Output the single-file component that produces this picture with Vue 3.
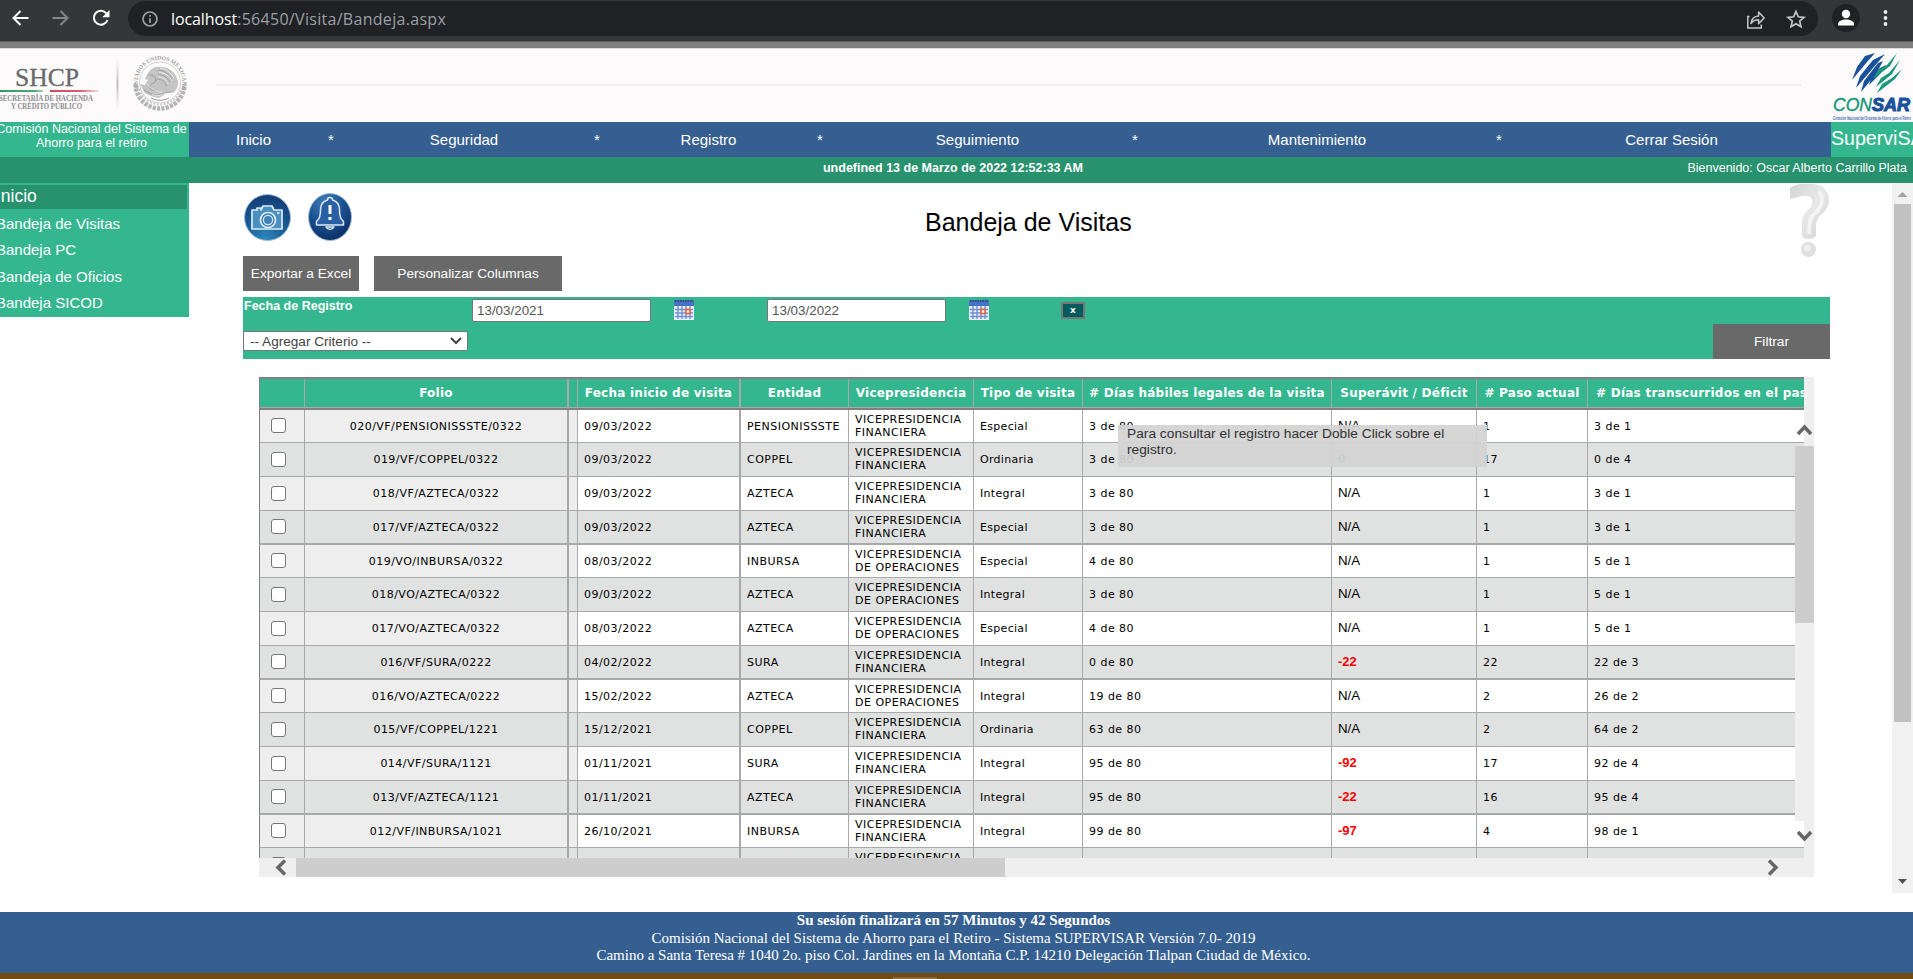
<script setup>
const menu = ['Inicio', 'Seguridad', 'Registro', 'Seguimiento', 'Mantenimiento', 'Cerrar Sesión']
const sideItems = ['Bandeja de Visitas', 'Bandeja PC', 'Bandeja de Oficios', 'Bandeja SICOD']
const heads = ['', 'Folio', '', 'Fecha inicio de visita', 'Entidad', 'Vicepresidencia', 'Tipo de visita', '# Días hábiles legales de la visita', 'Superávit / Déficit', '# Paso actual', '# Días transcurridos en el paso']
const FIN = ['VICEPRESIDENCIA', 'FINANCIERA']
const OPE = ['VICEPRESIDENCIA', 'DE OPERACIONES']
const rows = [
  ['020/VF/PENSIONISSSTE/0322', '09/03/2022', 'PENSIONISSSTE', FIN, 'Especial', '3 de 80', 'N/A', '1', '3 de 1'],
  ['019/VF/COPPEL/0322', '09/03/2022', 'COPPEL', FIN, 'Ordinaria', '3 de 80', '0', '17', '0 de 4'],
  ['018/VF/AZTECA/0322', '09/03/2022', 'AZTECA', FIN, 'Integral', '3 de 80', 'N/A', '1', '3 de 1'],
  ['017/VF/AZTECA/0322', '09/03/2022', 'AZTECA', FIN, 'Especial', '3 de 80', 'N/A', '1', '3 de 1'],
  ['019/VO/INBURSA/0322', '08/03/2022', 'INBURSA', OPE, 'Especial', '4 de 80', 'N/A', '1', '5 de 1'],
  ['018/VO/AZTECA/0322', '09/03/2022', 'AZTECA', OPE, 'Integral', '3 de 80', 'N/A', '1', '5 de 1'],
  ['017/VO/AZTECA/0322', '08/03/2022', 'AZTECA', OPE, 'Especial', '4 de 80', 'N/A', '1', '5 de 1'],
  ['016/VF/SURA/0222', '04/02/2022', 'SURA', FIN, 'Integral', '0 de 80', '-22', '22', '22 de 3'],
  ['016/VO/AZTECA/0222', '15/02/2022', 'AZTECA', OPE, 'Integral', '19 de 80', 'N/A', '2', '26 de 2'],
  ['015/VF/COPPEL/1221', '15/12/2021', 'COPPEL', FIN, 'Ordinaria', '63 de 80', 'N/A', '2', '64 de 2'],
  ['014/VF/SURA/1121', '01/11/2021', 'SURA', FIN, 'Integral', '95 de 80', '-92', '17', '92 de 4'],
  ['013/VF/AZTECA/1121', '01/11/2021', 'AZTECA', FIN, 'Integral', '95 de 80', '-22', '16', '95 de 4'],
  ['012/VF/INBURSA/1021', '26/10/2021', 'INBURSA', FIN, 'Integral', '99 de 80', '-97', '4', '98 de 1'],
  ['', '', '', FIN, '', '', '', '', ''],
]
const balance = (v) => (v.startsWith('-') ? 'neg' : v === '0' ? 'zero' : '')
</script>

<template>
  <div class="page">
    <div class="chrome">
      <svg class="navicons" width="128" height="36" viewBox="0 0 128 36" fill="none" stroke="#fff" stroke-width="2">
        <path d="M28.5 18H14M20.5 11l-7 7 7 7" />
        <path d="M52.500 18H67M60.500 11l7 7-7 7" stroke="#85868a" />
        <path d="M106.500 13.500A7 7 0 1 0 107.500 20" />
        <path d="M109.500 10v7.200h-7.200z" fill="#fff" stroke="none" />
      </svg>
      <div class="pill">
        <svg width="18" height="18" viewBox="0 0 18 18" fill="none" stroke="#9aa0a6" stroke-width="1.700">
          <circle cx="9" cy="9" r="7" /><path d="M9 8.200V13M9 5v1.800" />
        </svg>
        <span class="url"><b>localhost</b>:56450/Visita/Bandeja.aspx</span>
        <svg class="share" width="64" height="24" viewBox="0 0 64 24" fill="none" stroke="#c4c5c7" stroke-width="1.500">
          <path d="M4.500 9.500H2.800V21h13.500v-3.500" />
          <path d="M6 16.500c.6-5 3.600-7.300 7.600-7.500V5l5.600 6-5.600 5.600v-3.800c-3.400 0-5.800 1-7.600 3.700z" stroke-linejoin="round" />
          <path d="M51 4.500l2.300 5.300 5.700.5-4.300 3.800 1.300 5.600-5-3-5 3 1.300-5.600-4.300-3.800 5.700-.5z" stroke-width="1.700" />
        </svg>
      </div>
      <svg class="account" width="95" height="36" viewBox="0 0 95 36">
        <circle cx="28" cy="18" r="14" fill="#202124" />
        <circle cx="28" cy="14" r="4.200" fill="#fff" />
        <path d="M20 25.600v-1.400c0-3 4-4.600 8-4.600s8 1.600 8 4.600v1.400z" fill="#fff" />
        <g fill="#e8eaed"><circle cx="67.500" cy="12" r="1.900" /><circle cx="67.500" cy="18" r="1.900" /><circle cx="67.500" cy="24" r="1.900" /></g>
      </svg>
    </div>
    <div class="edge"></div>

    <header class="banner">
      <svg width="216" height="74" viewBox="0 0 216 74">
        <defs>
          <linearGradient id="gr" x1="0" x2="1"><stop offset="0" stop-color="#2f9a5a" /><stop offset=".8" stop-color="#4fa874" /><stop offset="1" stop-color="#a9d3ba" /></linearGradient>
          <linearGradient id="rd" x1="0" x2="1"><stop offset="0" stop-color="#d04a5f" /><stop offset=".6" stop-color="#dc5c6e" /><stop offset="1" stop-color="#f6dfe2" /></linearGradient>
          <linearGradient id="dv" x1="0" y1="0" x2="0" y2="1"><stop offset="0" stop-color="#fcfafb" /><stop offset=".5" stop-color="#bbb" /><stop offset="1" stop-color="#fcfafb" /></linearGradient>
        </defs>
        <g font-family="'Liberation Serif', serif" fill="#6a6a6a">
          <text x="15" y="38" font-size="25" textLength="64" lengthAdjust="spacingAndGlyphs" stroke="#6a6a6a" stroke-width=".3">SHCP</text>
          <g font-size="7.200" font-weight="bold" fill="#8c8c8c">
            <text x="-1" y="52.500" textLength="94" lengthAdjust="spacingAndGlyphs">SECRETARÍA DE HACIENDA</text>
            <text x="11" y="61" textLength="71" lengthAdjust="spacingAndGlyphs">Y CRÉDITO PÚBLICO</text>
          </g>
        </g>
        <rect x="0" y="42" width="43" height="2" fill="url(#gr)" />
        <rect x="50" y="42" width="49" height="2" fill="url(#rd)" />
        <rect x="116.500" y="12" width="2" height="48" fill="url(#dv)" />
        <g fill="none" stroke="#b4b5b4">
          <path id="arc" d="M138.500 40A22.300 22.300 0 1 1 181.500 40" stroke="none" />
          <circle cx="160" cy="34.500" r="20.500" stroke-width=".8" stroke="#c5c5c5" />
          <path d="M135.500 36a24.500 24.500 0 0 0 49 0" stroke-width="4.500" stroke-dasharray="3.200 1.200" />
          <path d="M139 41a22 22 0 0 0 42 0" stroke-width="2" stroke-dasharray="2 1.500" stroke="#c9c9c9" />
        </g>
        <text font-family="'Liberation Serif', serif" font-size="5.800" font-weight="bold" fill="#a0a0a0"><textPath href="#arc" textLength="87">ESTADOS UNIDOS MEXICANOS</textPath></text>
        <path d="M147 27c3-6 8-9 14-8 9 0 16 7 17 15 0 4-1 7-3 9-3 0-5 1-8 2l-8 5c-6-1-12-3-15-6l-4-8 5 1 3-5-3-1z" fill="#c3c4c3" />
        <g fill="none" stroke="#9b9c9b" stroke-width="1">
          <path d="M149 27c4 0 7 2 7 5s-5 3-6 6 3 5 7 4M158 22c6 1 12 4 14 9M158 26c5 1 10 4 12 8M157 31c5 0 8 3 10 7M144 42c6 4 12 6 18 4s8-2 12-2M151 50c5 3 13 3 18 0" />
        </g>
        <g fill="none" stroke="#ebebeb" stroke-width=".9">
          <path d="M160 20c6 1 12 5 14 11M159 24c6 1 11 4 13 9M158 29c5 0 9 3 10 7M147 36c4 4 9 8 15 8M152 46c4 2 9 2 14-1" />
        </g>
      </svg>
      <div class="rule"></div>
      <svg class="consar" width="82" height="74" viewBox="0 0 82 74">
        <g fill="#1a519a">
          <path d="M34 8l10-3-8 9-15 18 5-13z" />
          <path d="M42 12l12-6-12 14-17 20 4-12z" />
          <path d="M47 15l5-2-7 13-15 18 3-11z" />
          <path d="M49 20l6-3-6 9-11 11 3-9z" />
        </g>
        <g fill="#17967a">
          <path d="M66 5l-7 13-17 13 5-9 9-5z" />
          <path d="M69 12l-8 14-16 13 5-9 8-5z" />
          <path d="M71 21l-7 10-18 14 5-9 10-6z" />
        </g>
        <g font-family="'Liberation Sans', sans-serif" font-style="italic" font-size="18.500">
          <text x="2" y="63" fill="#17967a" stroke="#17967a" stroke-width=".4" textLength="39" lengthAdjust="spacingAndGlyphs">CON</text>
          <text x="41" y="63" fill="#1a519a" font-weight="bold" stroke="#1a519a" stroke-width="1.100" textLength="38" lengthAdjust="spacingAndGlyphs">SAR</text>
        </g>
        <text x="2" y="71.500" font-family="'Liberation Sans', sans-serif" font-size="5.500" fill="#3f6cab" font-weight="bold" textLength="78" lengthAdjust="spacingAndGlyphs">Comisión Nacional del Sistema de Ahorro para el Retiro</text>
      </svg>
    </header>

    <nav class="topnav">
      <div class="org"><div class="org-text">Comisión Nacional del Sistema de<br />Ahorro para el retiro</div></div>
      <div class="links">
        <template v-for="(m, i) in menu" :key="m">
          <span v-if="i" class="star">*</span>
          <span class="link">{{ m }}</span>
        </template>
      </div>
      <div class="app-name">SuperviSAR</div>
    </nav>
    <div class="status">
      <span></span>
      <strong>undefined 13 de Marzo de 2022 12:52:33 AM</strong>
      <span class="welcome">Bienvenido: Oscar Alberto Carrillo Plata</span>
    </div>

    <div class="body">
      <aside class="side">
        <div class="side-head">Inicio</div>
        <div v-for="s in sideItems" :key="s" class="side-item">{{ s }}</div>
      </aside>

      <main class="main">
        <div class="title-row">
          <svg class="round-icons" width="112" height="50" viewBox="0 0 112 50">
            <defs>
              <radialGradient id="ball" cx=".45" cy=".95" r=".95"><stop offset="0" stop-color="#2b86b8" /><stop offset=".5" stop-color="#1b5b94" /><stop offset="1" stop-color="#123c74" /></radialGradient>
              <radialGradient id="ball2" cx=".4" cy=".2" r=".9"><stop offset="0" stop-color="#3f7db8" /><stop offset=".5" stop-color="#1a4f8f" /><stop offset="1" stop-color="#08265c" /></radialGradient>
            </defs>
            <circle cx="24.500" cy="25.500" r="23" fill="url(#ball)" stroke="#9fc0da" stroke-width="1" />
            <g fill="#4a8fbd" stroke="#dcebf5" stroke-width="1.700">
              <path d="M9 18h5v-2h4v2l2-4h9l2 4h8v19H9z" stroke-linejoin="round" />
              <circle cx="25" cy="28" r="7.500" fill="#3f83b4" /><circle cx="25" cy="28" r="4.600" fill="none" stroke-width="1.200" />
              <path d="M34 21h2.500" />
            </g>
            <ellipse cx="87" cy="25" rx="21.500" ry="23.500" fill="url(#ball2)" stroke="#9fb8d6" stroke-width="1" />
            <g fill="#2b5fa5" stroke="#dbe7f4" stroke-width="1.500" stroke-linejoin="round">
              <path d="M83 35a4.500 4.500 0 0 0 8 0z" />
              <path d="M87 5.500a2.500 2.500 0 0 1 2.500 2.500c5 1.300 7 5 7 10 0 7 1.500 9 4 11.500V33H73.500v-3.500c2.500-2.500 4-4.500 4-11.500 0-5 2-8.700 7-10A2.500 2.500 0 0 1 87 5.500z" />
            </g>
            <path d="M87 13v9M87 25v3" stroke="#fff" stroke-width="3" />
          </svg>
          <h1>Bandeja de Visitas</h1>
          <svg class="help" width="42" height="76" viewBox="0 0 42 76">
            <defs>
              <linearGradient id="q" x1="0" y1="0" x2="1" y2="1"><stop offset="0" stop-color="#d4d5d4" /><stop offset=".5" stop-color="#e6e7e6" /><stop offset="1" stop-color="#d2d4d2" /></linearGradient>
            </defs>
            <path d="M1 4C9-2 27-2 35 4c8 8 6 20-3 27-5 4-5 8-5 21-3 4-12 4-14 0V39c0-7 4-11 8-15 4-5 3-11-3-12-5-1-9 2-17 3z" fill="url(#q)" />
            <path d="M30 7c5 7 3 15-3 21-5 4-7 8-7 22" stroke="#f3f4f3" stroke-width="4" fill="none" />
            <circle cx="19.500" cy="65.500" r="7.500" fill="#dedfde" /><circle cx="18.500" cy="64" r="3.500" fill="#efefef" />
          </svg>
        </div>

        <div class="buttons">
          <button class="btn export">Exportar a Excel</button>
          <button class="btn custom">Personalizar Columnas</button>
        </div>

        <section class="filter">
          <div class="criteria">
            <strong class="flabel">Fecha de Registro</strong>
            <div class="date">13/03/2021</div>
            <svg class="cal" width="20" height="20" viewBox="0 0 20 20">
              <rect width="20" height="20" fill="#eaf0fb" /><rect width="20" height="6" fill="#4673c4" />
              <path d="M1 1h18" stroke="#2d3f63" stroke-width="1.500" stroke-dasharray="1.500 1" />
              <path d="M1 9.500h18M1 13h18M1 16.500h18M4 6v13M8 6v13M12 6v13M16 6v13" stroke="#7391d2" stroke-width="1.400" />
              <rect x="12" y="9.500" width="4" height="4" fill="#fff" stroke="#ef5b2b" stroke-width="1.500" />
            </svg>
            <div class="date second">13/03/2022</div>
            <svg class="cal" width="20" height="20" viewBox="0 0 20 20">
              <rect width="20" height="20" fill="#eaf0fb" /><rect width="20" height="6" fill="#4673c4" />
              <path d="M1 1h18" stroke="#2d3f63" stroke-width="1.500" stroke-dasharray="1.500 1" />
              <path d="M1 9.500h18M1 13h18M1 16.500h18M4 6v13M8 6v13M12 6v13M16 6v13" stroke="#7391d2" stroke-width="1.400" />
              <rect x="12" y="9.500" width="4" height="4" fill="#fff" stroke="#ef5b2b" stroke-width="1.500" />
            </svg>
            <div class="remove">x</div>
          </div>
          <div class="actions">
            <div class="select">
              <span>-- Agregar Criterio --</span>
              <svg width="12" height="8" viewBox="0 0 12 8" fill="none" stroke="#444" stroke-width="2"><path d="M1 1l5 5 5-5" /></svg>
            </div>
            <button class="btn apply">Filtrar</button>
          </div>
        </section>

        <section class="grid-box">
          <div class="grid">
            <div class="row head">
              <div v-for="(h, i) in heads" :key="i" class="cell" :class="'c' + i">{{ h }}</div>
            </div>
            <div v-for="(r, i) in rows" :key="i" class="row">
              <div class="cell c0"><i class="check"></i></div>
              <div class="cell c1">{{ r[0] }}</div>
              <div class="cell c2"></div>
              <div class="cell c3">{{ r[1] }}</div>
              <div class="cell c4">{{ r[2] }}</div>
              <div class="cell c5"><span>{{ r[3][0] }}<br />{{ r[3][1] }}</span></div>
              <div class="cell c6">{{ r[4] }}</div>
              <div class="cell c7">{{ r[5] }}</div>
              <div class="cell c8" :class="balance(r[6])">{{ r[6] }}</div>
              <div class="cell c9">{{ r[7] }}</div>
              <div class="cell c10">{{ r[8] }}</div>
            </div>
          </div>
          <div class="tip">Para consultar el registro hacer Doble Click sobre el registro.</div>
          <div class="vbar">
            <div class="vthumb"></div>
            <div class="vtrack"></div>
          </div>
          <svg class="chev up" width="17" height="13" viewBox="0 0 17 13"><path d="M2 11l6.500-7L15 11" /></svg>
          <svg class="chev down" width="17" height="13" viewBox="0 0 17 13"><path d="M2 2l6.500 7L15 2" /></svg>
          <div class="hbar">
            <div class="hleft"><svg class="chev-h" width="13" height="17" viewBox="0 0 13 17"><path d="M11 1.500L4 8.500l7 7" /></svg></div>
            <div class="hthumb"></div>
            <svg class="chev-h hright" width="13" height="17" viewBox="0 0 13 17"><path d="M2 1.500l7 7-7 7" /></svg>
          </div>
        </section>
      </main>

      <div class="scroll">
        <svg width="21" height="21" viewBox="0 0 21 21"><path d="M5.500 14l5-5 5 5z" fill="#a3a3a3" /></svg>
        <div class="thumb"></div>
        <svg class="end" width="21" height="21" viewBox="0 0 21 21"><path d="M6 7l4.500 5L15 7z" fill="#505050" /></svg>
      </div>
    </div>

    <footer class="foot">
      <strong>Su sesión finalizará en 57 Minutos y 42 Segundos</strong>
      <span>Comisión Nacional del Sistema de Ahorro para el Retiro - Sistema SUPERVISAR Versión 7.0- 2019</span>
      <span>Camino a Santa Teresa # 1040 2o. piso Col. Jardines en la Montaña C.P. 14210 Delegación Tlalpan Ciudad de México.</span>
    </footer>
    <div class="desk"><i></i></div>
  </div>
</template>

<style>
body { overflow: hidden; }
</style>

<style scoped>
.page { width: 1913px; height: 979px; overflow: hidden; background: #fff; font-family: "Liberation Sans", Arial, sans-serif; font-size: 12.5px; color: #000; }
.page * { box-sizing: border-box; }
.page svg { display: block; flex: none; }
.chrome { height: 41px; background: #35363a; display: flex; }
.pill { width: 1690px; height: 35px; margin-top: 1px; border-radius: 18px; background: #202124; display: flex; align-items: center; padding-left: 13px; }
.url { margin-left: 12px; font-family: "Open Sans", "Noto Sans", sans-serif; font-size: 16px; letter-spacing: .3px; color: #9aa0a6; white-space: nowrap; }
.url b { font-weight: 400; color: #fff; letter-spacing: -.1px; }
.share { margin-left: auto; margin-right: 9px; }
.edge { height: 7px; background: #808080; border-top: 1px solid #5a5b5e; }
.banner { height: 74px; background: #fcfafb; display: flex; border-top: 1px solid #ddd; }
.banner svg { margin-top: -1px; }
.rule { flex: none; width: 1585px; height: 2px; background: #eeeced; margin-top: 35px; }
.banner .consar { margin-left: 30px; }
.topnav { height: 35px; display: flex; color: #fff; }
.org { width: 189px; background: #34b78f; flex: none; overflow: hidden; }
.org-text { width: 195px; margin-left: -6px; text-align: center; white-space: nowrap; line-height: 14px; }
.links { width: 1642px; background: #365f91; display: grid; grid-template-columns: 139px 6px 260px 6px 217px 6px 309px 6px 358px 6px 329px; font-size: 15px; line-height: 35px; text-align: center; }
.link:first-child { padding-right: 10px; }
.link:last-child { padding-left: 10px; }
.app-name { width: 82px; background: #34b78f; font-size: 19.6px; line-height: 33px; overflow: hidden; flex: none; }
.status { height: 26px; background: #28916e; color: #fff; display: grid; grid-template-columns: 820px 266px 1fr; line-height: 23px; white-space: nowrap; }
.status strong { text-align: center; }
.welcome { text-align: right; padding-right: 6px; }
.body { height: 729px; display: flex; }
.side { width: 189px; height: 134px; background: #34b78f; color: #fff; font-size: 15px; flex: none; padding-top: 2px; overflow: hidden; }
.side-head { width: 187px; height: 24px; background: #28916e; font-size: 17.5px; line-height: 23px; text-indent: -4px; margin-bottom: 2px; }
.side-item { height: 26.3px; line-height: 26px; text-indent: -4px; }
.main { width: 1703px; padding-left: 54px; flex: none; }
.title-row { height: 73px; width: 1588px; display: flex; }
.round-icons { margin-top: 9px; }
h1 { margin: 0 0 0 570px; font-size: 25px; font-weight: 400; line-height: 78px; width: 240px; white-space: nowrap; }
.help { margin-left: auto; margin-top: 1px; }
.buttons { display: flex; gap: 15px; height: 35px; }
.btn { border: 0; padding: 0; background: #696969; color: #fff; font: 13.7px "Liberation Sans", Arial, sans-serif; height: 35px; white-space: nowrap; }
.export { width: 116px; }
.custom { width: 188px; }
.filter { margin-top: 6px; width: 1587px; height: 62px; background: #34b78f; }
.criteria { height: 27px; display: flex; align-items: flex-start; padding-top: 2px; }
.flabel { width: 229px; padding-left: 1px; color: #fff; line-height: 14px; }
.date { width: 179px; height: 23px; border: 1px solid #767676; background: #fff; border-radius: 2px; color: #555; font-size: 13.4px; line-height: 21px; padding-left: 4px; }
.cal { margin: 1px 0 0 23px; }
.second { margin-left: 73px; }
.remove { margin: 3px 0 0 72px; width: 24px; height: 17px; border: 2px solid #767676; background: #045a5c; color: #fff; font: bold 9px/12px "DejaVu Sans", sans-serif; text-align: center; }
.actions { display: flex; justify-content: space-between; height: 35px; }
.select { width: 225px; height: 20px; margin-top: 7px; border: 1px solid #767676; border-radius: 2px; background: #fff; color: #444; font-size: 13.6px; display: flex; align-items: center; justify-content: space-between; padding: 0 5px 0 6px; }
.apply { width: 117px; }
.grid-box { position: relative; margin: 18px 0 0 16px; width: 1555px; height: 500px; background: #efefef; }
.grid { width: 1545px; height: 481px; overflow: hidden; background: #fff; }
.row { display: grid; grid-template-columns: 46px 264px 9px 163px 108px 125px 109px 249px 145px 111px 216px; height: 34px; font: 11px/13px "DejaVu Sans", Verdana, sans-serif; letter-spacing: .47px; background: #fff; }
.row:nth-child(4n + 2) { height: 33px; }
.row:nth-child(odd) { background: #e0e2e1; }
.cell { display: flex; align-items: center; padding-left: 6px; border-right: 1px solid #a9a9a9; border-bottom: 1px solid #a9a9a9; white-space: nowrap; min-width: 0; }
.row:nth-child(4n + 1) .cell { border-bottom-width: 2px; }
.c0 { border-left: 1px solid #808080; justify-content: center; padding: 0 7px 1px 0; }
.c1 { justify-content: center; padding: 0; border-right-width: 2px; }
.c3 { border-right-width: 2px; }
.c10 { border-right: 0; }
.row:nth-child(even) .c0, .row:nth-child(even) .c1, .row:nth-child(even) .c2 { background: #eee; }
.c5 { letter-spacing: .5px; padding-bottom: 1px; }
.c6 { letter-spacing: .3px; }
.c8 { font: 13.3px "Liberation Sans", Arial, sans-serif; letter-spacing: 0; padding-bottom: 2px; }
.c8.neg { color: red; font-weight: bold; font-size: 13px; }
.c8.zero { color: #1c9a3c; font-weight: bold; }
.row.head { height: 33px; background: #34b78f; border-top: 2px solid #808080; border-bottom: 2px solid #808080; color: #fff; font: bold 12px "DejaVu Sans", Verdana, sans-serif; letter-spacing: .24px; }
.row.head .cell { justify-content: center; padding: 0; background: #34b78f; border-bottom: 1px solid #a9a9a9; font: inherit; letter-spacing: inherit; }
.row.head .c10 { justify-content: flex-start; padding-left: 8px; overflow: hidden; }
.check { width: 15px; height: 15px; border: 1.5px solid #767676; border-radius: 3px; background: #fff; }
.tip { position: absolute; left: 859px; top: 48px; width: 369px; height: 42px; background: #d3d3d3; opacity: .93; font-size: 13.7px; letter-spacing: .03px; line-height: 16px; padding: 1px 20px 0 9px; color: #222; }
.vbar { position: absolute; right: 0; top: 69px; width: 19px; height: 375px; display: flex; flex-direction: column; }
.vthumb { height: 177px; background: #cdcdcd; }
.vtrack { flex: 1; background: #efefef; }
.chev, .chev-h { fill: none; stroke: #666; stroke-width: 3.5; }
.chev { position: absolute; right: 1px; }
.up { top: 46px; }
.down { top: 453px; }
.hbar { height: 19px; display: flex; align-items: center; }
.hleft { width: 37px; padding-left: 15px; }
.hthumb { width: 709px; height: 19px; background: #cdcdcd; }
.hright { margin-left: auto; margin-right: 34px; }
.scroll { width: 21px; height: 710px; background: #f1f1f1; display: flex; flex-direction: column; }
.thumb { width: 17px; height: 518px; margin-left: 2px; background: #c1c1c1; }
.end { margin-top: auto; }
.foot { height: 61px; background: #365f91; color: #fff; font: 15px/17.5px "Liberation Serif", "Times New Roman", serif; display: flex; flex-direction: column; align-items: center; padding-right: 6px; white-space: nowrap; }
.desk { height: 6px; background: #744c12; padding: 4px 0 0 893px; }
.desk i { display: block; width: 44px; height: 2px; background: #8a6a3a; }
</style>
